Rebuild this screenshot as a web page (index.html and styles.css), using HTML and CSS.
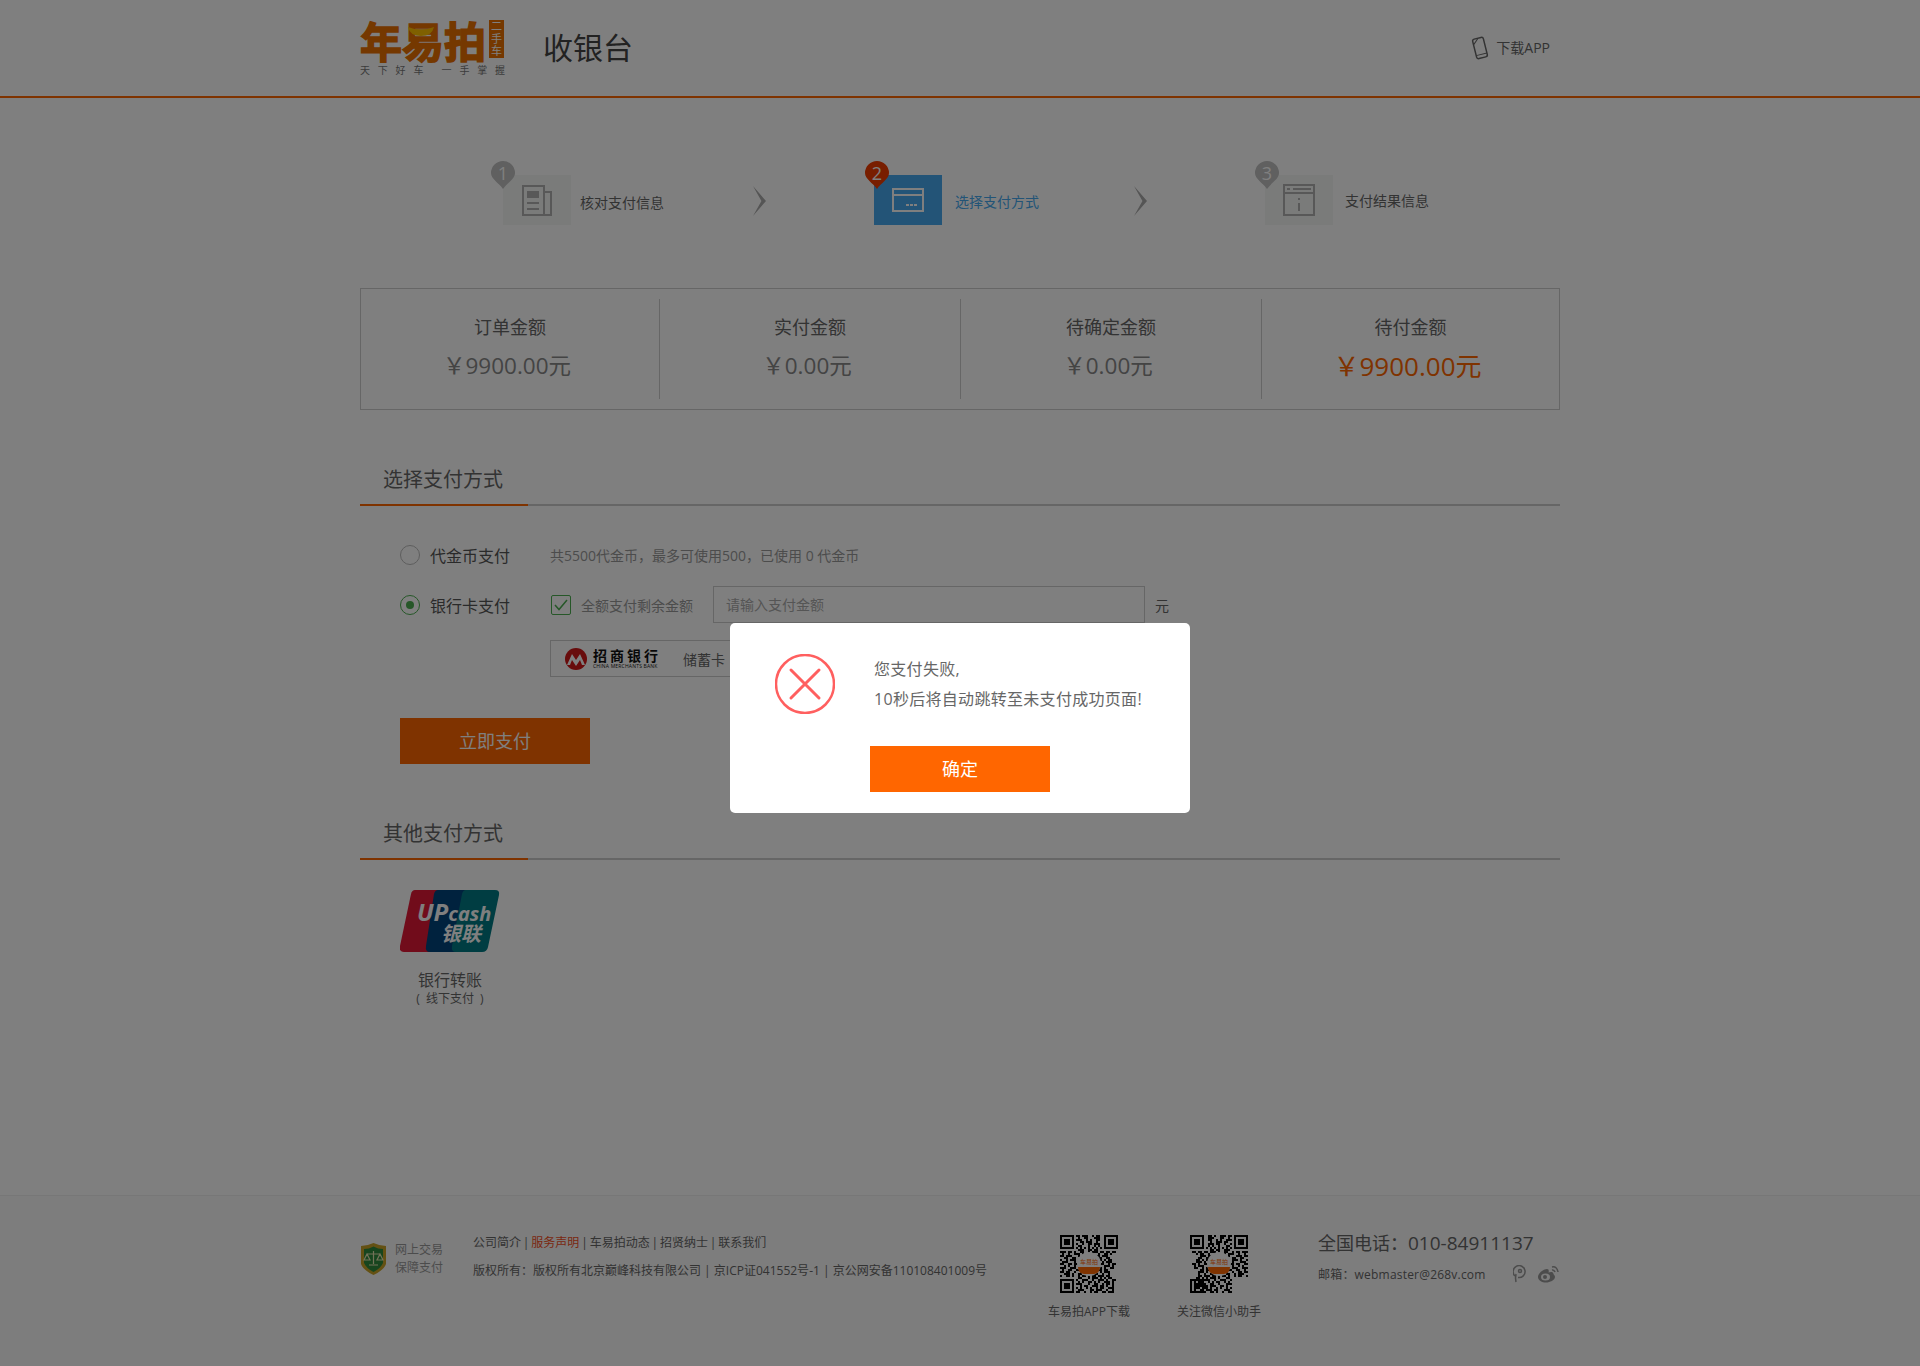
FILE: index.html
```html
<!DOCTYPE html>
<html lang="zh-CN">
<head>
    <meta charset="UTF-8">
    <title>收银台</title>
    <link rel="stylesheet" href="styles.css">
</head>
<body>
    <svg class="defs" width="0" height="0">
        <symbol id="qrData" viewBox="0 0 29 29">
            <path stroke="#000" stroke-width="1" fill="none" shape-rendering="crispEdges" d="M8 .5h2m1 0h3m2 0h1m1 0h2M9 1.5h1m2 0h2m3 0h3M8 2.5h3m2 0h1m1 0h1m2 0h2M10 3.5h2m1 0h3m2 0h1M8 4.5h1m2 0h1m2 0h2m1 0h3M9 5.5h2m3 0h1m2 0h1m1 0h1M8 6.5h1m1 0h1m1 0h1m1 0h1m1 0h1m1 0h1m1 0h1M9 7.5h3m2 0h2m1 0h2M0 8.5h3m1 0h2m1 0h1m2 0h2m2 0h1m1 0h3m1 0h2m1 0h2m1 0h2M1 9.5h1m2 0h1m2 0h3m1 0h1m3 0h2m2 0h1m2 0h2m1 0h1M0 10.5h2m1 0h3m3 0h1m2 0h2m2 0h1m1 0h2m1 0h3M2 11.5h2m2 0h2m2 0h1m1 0h2m1 0h2m2 0h2m2 0h2M0 12.5h1m2 0h1m1 0h3m3 0h2m2 0h1m2 0h3m1 0h1m1 0h2M1 13.5h3m3 0h1m1 0h2m7 0h1m2 0h1m1 0h3M0 14.5h2m2 0h2m1 0h2m10 0h3m2 0h1m1 0h2M2 15.5h1m1 0h1m2 0h1m11 0h1m2 0h3m1 0h1M0 16.5h3m2 0h3m1 0h1m9 0h2m1 0h1m2 0h2M1 17.5h1m2 0h2m2 0h3m1 0h2m2 0h2m1 0h2m1 0h2M0 18.5h2m1 0h2m2 0h1m2 0h1m1 0h3m1 0h1m3 0h1m1 0h3M2 19.5h3m1 0h1m2 0h2m2 0h1m2 0h3m2 0h1m2 0h1M0 20.5h1m2 0h2m1 0h1m2 0h1m1 0h2m1 0h1m1 0h2m1 0h3m1 0h2M9 21.5h2m3 0h1m1 0h3m1 0h1m1 0h1m1 0h2M8 22.5h1m2 0h3m2 0h1m2 0h3m1 0h1m2 0h2M9 23.5h1m1 0h1m2 0h2m1 0h1m1 0h1m2 0h3m1 0h1M8 24.5h3m3 0h1m2 0h2m2 0h1m1 0h2m1 0h1M10 25.5h1m1 0h2m2 0h3m1 0h2m1 0h1m2 0h1M8 26.5h1m1 0h1m2 0h1m1 0h1m2 0h1m1 0h2m2 0h3M9 27.5h3m3 0h2m1 0h3m2 0h1m2 0h1M8 28.5h2m2 0h1m2 0h1m1 0h2m2 0h2m1 0h3"/>
        </symbol>
        <symbol id="qrFinder" viewBox="0 0 29 29">
            <g fill="none" stroke="#000">
                <rect x=".5" y=".5" width="6" height="6"/>
                <rect x="22.5" y=".5" width="6" height="6"/>
                <rect x=".5" y="22.5" width="6" height="6"/>
            </g>
            <rect x="2" y="2" width="3" height="3"/>
            <rect x="24" y="2" width="3" height="3"/>
            <rect x="2" y="24" width="3" height="3"/>
            <circle cx="14.5" cy="14.5" r="6" fill="#fff"/>
            <path d="M9 16h11q0 3-3 3.5h-5q-3-.5-3-3.5z" fill="#f60"/>
        </symbol>
    </svg>

    <header class="top">
        <div class="wrap topInner">
            <div class="logo">
                <div class="logoMain">
                    <span class="logoName">年易拍</span>
                    <svg class="logoSmile" width="26" height="9" viewBox="0 0 26 9"><path d="M0 0q13 5 26 0q-2 9-13 9t-13-9z" fill="#ffc000"/></svg>
                    <span class="logoTag">二手车</span>
                </div>
                <div class="logoSub">天下好车 一手掌握</div>
            </div>
            <div class="topTitle">收银台</div>
            <div class="appLink">
                <svg width="20" height="24" viewBox="0 0 20 24"><g transform="rotate(-14 10 12)" fill="none" stroke="#666" stroke-width="1.500"><rect x="4.500" y="2" width="11" height="20" rx="2"/><path d="M4.500 18.500h11M5 7l5-4.500" stroke-width="1"/></g></svg>
                <span>下载APP</span>
            </div>
        </div>
    </header>

    <div class="wrap">
        <div class="steps">
            <div class="step step1">
                <div class="stepBox">
                    <svg class="pin" width="24" height="28" viewBox="0 0 24 28"><path d="M12 28C8 22 0 18 0 12a12 12 0 0 1 24 0c0 6-8 10-12 16z"/><text x="12" y="18.500" text-anchor="middle">1</text></svg>
                    <svg width="30" height="31" viewBox="0 0 30 31" fill="none" stroke="#b0b0b0" stroke-width="2"><path d="M22 1H1v29h28V7h-7zM22 7v23"/><rect x="5" y="6" width="12" height="7" fill="#b0b0b0" stroke="none"/><path d="M5 18h12M5 24h12"/></svg>
                </div>
                <span class="stepText">核对支付信息</span>
                <span class="chev"></span>
            </div>
            <div class="step step2 stepOn">
                <div class="stepBox">
                    <svg class="pin" width="24" height="28" viewBox="0 0 24 28"><path d="M12 28C8 22 0 18 0 12a12 12 0 0 1 24 0c0 6-8 10-12 16z"/><text x="12" y="18.500" text-anchor="middle">2</text></svg>
                    <svg width="32" height="24" viewBox="0 0 32 24" fill="none" stroke="#fff" stroke-width="2"><rect x="1" y="1" width="30" height="22"/><path d="M1 7h30"/><path d="M14 17h3m1 0h3m1 0h3" stroke-width="2"/></svg>
                </div>
                <span class="stepText">选择支付方式</span>
                <span class="chev"></span>
            </div>
            <div class="step step3">
                <div class="stepBox">
                    <svg class="pin" width="24" height="28" viewBox="0 0 24 28"><path d="M12 28C8 22 0 18 0 12a12 12 0 0 1 24 0c0 6-8 10-12 16z"/><text x="12" y="18.500" text-anchor="middle">3</text></svg>
                    <svg width="32" height="32" viewBox="0 0 32 32" fill="none" stroke="#b0b0b0" stroke-width="2"><rect x="1" y="1" width="30" height="30"/><path d="M1 9h30M4 5h3M10 5h18M16 14v2M16 19v8" stroke-width="2"/></svg>
                </div>
                <span class="stepText">支付结果信息</span>
            </div>
        </div>

        <div class="summary">
            <div class="sumCell"><div class="sumLabel">订单金额</div><div class="sumValue">￥9900.00元</div></div>
            <div class="sumCell"><div class="sumLabel">实付金额</div><div class="sumValue">￥0.00元</div></div>
            <div class="sumCell"><div class="sumLabel">待确定金额</div><div class="sumValue">￥0.00元</div></div>
            <div class="sumCell"><div class="sumLabel">待付金额</div><div class="sumValue sumDue">￥9900.00元</div></div>
        </div>

        <div class="sectionHead sectionPay"><h2>选择支付方式</h2></div>
        <div class="payForm">
            <div class="payRow">
                <span class="radio"></span>
                <span class="payName">代金币支付</span>
                <span class="payHint">共5500代金币，最多可使用500，已使用 0 代金币</span>
            </div>
            <div class="payRow payRow2">
                <span class="radio radioOn"></span>
                <span class="payName">银行卡支付</span>
                <span class="checkBox">
                    <svg width="14" height="12" viewBox="0 0 14 12" fill="none" stroke="#4caf50" stroke-width="1.500"><path d="M1 6l4 4.500L13 1"/></svg>
                </span>
                <span class="payHint checkText">全额支付剩余金额</span>
                <input class="amount" type="text" placeholder="请输入支付金额">
                <span class="unit">元</span>
            </div>
            <div class="cardBox">
                <svg width="24" height="24" viewBox="0 0 24 24"><circle cx="12" cy="12" r="11" fill="#d01818"/><path d="M3 18L8 7l4 6 4-6 5 11h-3l-2-5-4 6-4-6-2 5z" fill="#fff"/></svg>
                <div class="bankName">
                    <div class="bankCn">招商银行</div>
                    <div class="bankEn">CHINA MERCHANTS BANK</div>
                </div>
                <span class="cardType">储蓄卡</span>
            </div>
            <div class="payBtn">立即支付</div>
        </div>

        <div class="sectionHead sectionOther"><h2>其他支付方式</h2></div>
        <div class="transfer">
            <svg width="100" height="62" viewBox="0 0 100 62">
                <path d="M15 0h40q5 0 4 5L47 62H4q-5 0-4-6L11 4q1-4 4-4z" fill="#e21836"/>
                <path d="M38 0h42q5 0 4 5L72 62H30q-5 0-4-6L34 4q1-4 4-4z" fill="#00447c"/>
                <path d="M66 0h29q5 0 4 5L88 57q-1 5-6 5H56q-5 0-4-6L62 4q1-4 4-4z" fill="#007b84"/>
                <text x="17" y="31" font-family="Open Sans" font-weight="700" font-style="italic" font-size="24" fill="#fff">UP<tspan font-size="20">cash</tspan></text>
                <text x="41" y="51" font-family="Noto Sans CJK SC" font-weight="700" font-style="italic" font-size="20" fill="#fff">银联</text>
            </svg>
            <div class="transferName">银行转账</div>
            <div class="transferNote">( 线下支付 )</div>
        </div>
    </div>

    <footer class="foot">
        <div class="wrap footInner">
            <div class="safe">
                <svg width="27" height="32" viewBox="0 0 27 32"><path d="M1 3q6 0 12.500-3Q20 3 26 3v18q-2 6-12.500 11Q3 27 1 21z" fill="#c9a227"/><path d="M4 6q5 0 9.500-2.500Q18 6 23 6v14q-2 5-9.500 9Q6 25 4 20z" fill="#2e8b3d"/><path d="M13.500 8v13M7 11h13M7 11l-3 6h6zM20 11l-3 6h6zM9 22h9" fill="none" stroke="#e8e4b0" stroke-width="1.200"/></svg>
                <div class="safeText">网上交易<br>保障支付</div>
            </div>
            <div class="footLinks">
                <div class="linkRow">公司简介 | <span class="hot">服务声明</span> | 车易拍动态 | 招贤纳士 | 联系我们</div>
                <div class="copyRow">版权所有：版权所有北京巅峰科技有限公司 | 京ICP证041552号-1 | 京公网安备110108401009号</div>
            </div>
            <div class="qrBox qrFirst">
                <svg width="58" height="58" viewBox="0 0 29 29"><use href="#qrData"/><use href="#qrFinder"/><text class="qrMark" x="14.500" y="14.600" text-anchor="middle">车易拍</text></svg>
                <div class="qrText">车易拍APP下载</div>
            </div>
            <div class="qrBox">
                <svg width="58" height="58" viewBox="0 0 29 29"><use href="#qrData" transform="matrix(-1 0 0 1 29 0)"/><use href="#qrFinder"/><text class="qrMark" x="14.500" y="14.600" text-anchor="middle">车易拍</text></svg>
                <div class="qrText">关注微信小助手</div>
            </div>
            <div class="contact">
                <div class="phone">全国电话：<span class="phoneNum">010-84911137</span></div>
                <div class="mailRow">
                    <span class="mailText">邮箱：webmaster@268v.com</span>
                    <svg class="tqq" width="14" height="18" viewBox="0 0 14 18" fill="none" stroke="#999" stroke-width="1.500"><path d="M3 17q-1-4 0-8"/><path d="M2 11a6 6 0 1 1 3 1.500"/><circle cx="7" cy="6" r="1.500"/></svg>
                    <svg width="21" height="17" viewBox="0 0 21 17"><path d="M8 16.500C4 16.500 0 14.500 0 11c0-4 6-8 9-8 2 0 2 2 1.500 3.500 2-1 5-1 5 1.500 0 1 1.500 1 1.500 3 0 3-5 5.500-9 5.500z" fill="#999"/><ellipse cx="7.500" cy="11" rx="4.500" ry="3.500" fill="#fafafa"/><circle cx="7" cy="11" r="2" fill="#999"/><path d="M14 1q5-1 6 5M14 4q2-.500 3 2" fill="none" stroke="#999" stroke-width="1.500"/></svg>
                </div>
            </div>
        </div>
    </footer>

    <div class="mask">
        <div class="dialog">
            <div class="dialogBody">
                <svg width="60" height="60" viewBox="0 0 60 60" fill="none" stroke="#ff5f5f"><circle cx="30" cy="30" r="29" stroke-width="2.500"/><path d="M16 16l28 28M44 16L16 44" stroke-width="3" stroke-linecap="round"/></svg>
                <div class="dialogText">您支付失败,<br>10秒后将自动跳转至未支付成功页面!</div>
            </div>
            <div class="dialogBtn">确定</div>
        </div>
    </div>
</body>
</html>
```

FILE: styles.css
```css
* {
    box-sizing: border-box;
}

body {
    margin: 0;
    background-color: #fff;
    color: #666;
    font-family: "Open Sans", "Noto Sans CJK SC", sans-serif;
    font-size: 14px;
}

.defs {
    position: absolute;
}

.wrap {
    width: 1200px;
    margin: 0 auto;
}

/* top bar */
.top {
    height: 98px;
    border-bottom: 2px solid #f60;
}

.topInner {
    display: flex;
    align-items: flex-start;
}

.logo {
    width: 144px;
    margin-top: 20px;
}

.logoMain {
    position: relative;
    display: flex;
    justify-content: space-between;
    height: 39px;
}

.logoName {
    color: #ea7000;
    font-family: "Noto Sans CJK SC", sans-serif;
    font-size: 42px;
    font-weight: 700;
    line-height: 39px;
    white-space: nowrap;
    -webkit-text-stroke: 1.500px #ea7000;
}

.logoSmile {
    position: absolute;
    left: 48px;
    top: 7px;
}

.logoTag {
    width: 15px;
    height: 38px;
    background-color: #ea7000;
    color: #fff;
    font-size: 11px;
    line-height: 12.500px;
    text-align: center;
}

.logoSub {
    margin-top: 5px;
    color: #777;
    font-size: 10px;
    line-height: 12px;
    letter-spacing: 7.800px;
    white-space: nowrap;
}

.topTitle {
    margin-top: 26px;
    margin-left: 39px;
    color: #444;
    font-size: 30px;
    line-height: 44px;
}

.appLink {
    display: flex;
    align-items: center;
    gap: 6px;
    margin-top: 36px;
    margin-left: auto;
    margin-right: 10px;
    line-height: 24px;
}

/* steps */
.steps {
    display: flex;
    margin-top: 77px;
    padding-left: 143px;
}

.step {
    display: flex;
    align-items: center;
    height: 50px;
}

.step1 {
    width: 371px;
}

.step2 {
    width: 391px;
}

.stepBox {
    position: relative;
    display: flex;
    align-items: center;
    justify-content: center;
    width: 68px;
    height: 50px;
    background-color: #f4f6f5;
}

.stepOn .stepBox {
    background-color: #46a9ee;
}

.stepText {
    margin-left: 9px;
    color: #666;
    white-space: nowrap;
}

.step1 .stepText {
    padding-top: 3px;
}

.step2 .stepText {
    margin-left: 13px;
    padding-top: 1px;
}

.step3 .stepText {
    margin-left: 12px;
}

.stepOn .stepText {
    color: #46a9ee;
}

.pin {
    position: absolute;
    left: -12px;
    top: -14px;
    fill: #c0c0c0;
}

.pin text {
    fill: #fff;
    font-size: 18px;
}

.stepOn .pin {
    left: -9px;
    fill: #f03c00;
}

.step3 .pin {
    left: -10px;
}

.chev {
    width: 13px;
    height: 30px;
    margin-left: 89px;
    margin-top: 2px;
    background-color: #aaa;
    clip-path: polygon(0 0, 100% 50%, 0 100%, 65% 50%);
}

.step2 .chev {
    margin-left: 95px;
}

/* amounts */
.summary {
    display: flex;
    height: 122px;
    margin-top: 63px;
    padding: 10px 0;
    border: 1px solid #ccc;
}

.sumCell {
    width: 301px;
    border-right: 1px solid #ccc;
    text-align: center;
}

.sumCell:first-child {
    width: 299px;
}

.sumCell:last-child {
    width: 297px;
    border-right: none;
}

.sumLabel {
    margin-top: 15px;
    color: #666;
    font-size: 18px;
    line-height: 26px;
}

.sumValue {
    margin-top: 11px;
    padding-right: 6px;
    color: #888;
    font-size: 22.500px;
    line-height: 30px;
}

.sumDue {
    color: #f60;
    font-size: 26px;
}

/* pay methods */
.sectionHead {
    border-bottom: 2px solid #ccc;
}

.sectionHead h2 {
    display: inline-block;
    width: 168px;
    height: 41px;
    margin: 0 0 -2px;
    padding-left: 23px;
    border-bottom: 2px solid #f60;
    color: #666;
    font-size: 20px;
    font-weight: 400;
    line-height: 30px;
    vertical-align: top;
}

.sectionPay {
    margin-top: 55px;
}

.sectionOther {
    margin-top: 55px;
}

.payForm {
    padding: 31px 0 0 40px;
}

.payRow {
    display: flex;
    align-items: center;
    height: 36px;
}

.payRow2 {
    height: 37px;
    margin-top: 13px;
}

.radio {
    position: relative;
    width: 20px;
    height: 20px;
    border: 1px solid #bbb;
    border-radius: 50%;
}

.radioOn {
    border-color: #4caf50;
}

.radioOn::after {
    content: "";
    position: absolute;
    left: 5px;
    top: 5px;
    width: 8px;
    height: 8px;
    border-radius: 50%;
    background-color: #4caf50;
}

.payName {
    width: 130px;
    padding-left: 10px;
    color: #555;
    font-size: 16px;
    white-space: nowrap;
}

.payHint {
    color: #999;
    white-space: nowrap;
}

.checkBox {
    display: flex;
    align-items: center;
    justify-content: center;
    width: 20px;
    height: 20px;
    margin-left: 1px;
    border: 1px solid #4caf50;
    border-radius: 2px;
}

.checkText {
    margin-left: 10px;
}

.amount {
    width: 432px;
    height: 37px;
    margin-left: 20px;
    padding: 0 12px;
    border: 1px solid #ccc;
    font-family: inherit;
    font-size: 14px;
}

.amount::placeholder {
    color: #aaa;
}

.unit {
    margin-left: 10px;
    color: #666;
}

.cardBox {
    display: flex;
    align-items: center;
    width: 300px;
    height: 37px;
    margin-top: 17px;
    margin-left: 150px;
    padding-left: 13px;
    border: 1px solid #ccc;
}

.bankName {
    margin-left: 5px;
    color: #111;
}

.bankCn {
    font-size: 14px;
    font-weight: 700;
    line-height: 15px;
    letter-spacing: 3px;
    white-space: nowrap;
}

.bankEn {
    font-size: 5px;
    line-height: 6px;
    letter-spacing: .200px;
    white-space: nowrap;
}

.cardType {
    margin-left: 22px;
    color: #666;
}

.payBtn {
    width: 190px;
    height: 46px;
    margin-top: 41px;
    background-color: #f60;
    color: #fff;
    font-size: 18px;
    line-height: 46px;
    text-align: center;
}

.transfer {
    width: 100px;
    margin-top: 30px;
    margin-left: 40px;
    text-align: center;
}

.transfer svg {
    display: block;
}

.transferName {
    margin-top: 16px;
    color: #666;
    font-size: 16px;
    line-height: 24px;
}

.transferNote {
    margin-top: -2px;
    color: #666;
    font-size: 12px;
    line-height: 18px;
    word-spacing: 3px;
}

/* footer */
.foot {
    height: 171px;
    margin-top: 187px;
    border-top: 1px solid #eee;
    background-color: #fafafa;
    font-size: 12px;
}

.footInner {
    display: flex;
    align-items: flex-start;
    padding-top: 39px;
}

.safe {
    display: flex;
    gap: 8px;
    width: 113px;
    margin-top: 8px;
}

.safeText {
    margin-top: -2px;
    color: #999;
    line-height: 18px;
    white-space: nowrap;
}

.footLinks {
    width: 587px;
    margin-top: -1px;
    color: #666;
}

.linkRow {
    line-height: 18px;
    word-spacing: -1.250px;
}

.copyRow {
    margin-top: 10px;
    line-height: 18px;
    white-space: nowrap;
}

.hot {
    color: #f5501e;
}

.qrBox {
    width: 84px;
    margin-right: 46px;
    text-align: center;
    white-space: nowrap;
}

.qrFirst {
    margin-left: -13px;
}

.qrBox svg {
    display: block;
    margin: 0 auto;
}

.qrMark {
    fill: #f60;
    font-size: 3px;
}

.qrText {
    margin-top: 10px;
    line-height: 18px;
}

.contact {
    margin-left: 11px;
    white-space: nowrap;
}

.phone {
    color: #666;
    font-size: 18px;
    line-height: 26px;
    margin-top: -5px;
}

.phoneNum {
    font-size: 19px;
}

.mailRow {
    display: flex;
    align-items: center;
    margin-top: 9px;
}

.mailText {
    letter-spacing: .200px;
}

.tqq {
    margin-left: 27px;
    margin-right: 11px;
}

/* dialog */
.mask {
    position: fixed;
    left: 0;
    top: 0;
    width: 100%;
    height: 100%;
    padding-top: 623px;
    background-color: rgba(0, 0, 0, .5);
}

.dialog {
    width: 460px;
    height: 190px;
    margin: 0 auto;
    padding-top: 31px;
    border-radius: 5px;
    background-color: #fff;
}

.dialogBody {
    display: flex;
    align-items: flex-start;
    padding-left: 45px;
}

.dialogText {
    margin-left: 39px;
    color: #666;
    font-size: 16px;
    line-height: 30px;
    letter-spacing: .300px;
    white-space: nowrap;
}

.dialogBtn {
    width: 180px;
    height: 46px;
    margin: 32px auto 0;
    background-color: #f60;
    color: #fff;
    font-size: 18px;
    line-height: 46px;
    text-align: center;
}
```
